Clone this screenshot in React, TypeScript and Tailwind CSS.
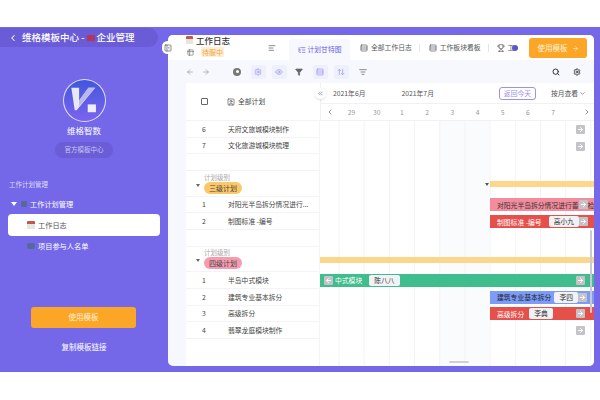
import { ArrowLeft, ArrowRight, ChevronDown, ChevronLeft, ChevronRight, ChevronsLeft, Eye, Filter, ListTree, Search, Settings, AlignLeft, Rows3, ArrowUpDown, ListFilter, Table2, SquareUser, Trophy, PanelLeftClose } from "lucide-react"

const font = "font-['Noto_Sans_CJK_SC','Noto_Sans',sans-serif]"

function GoArrow({ back }: { back?: boolean }) {
  return (
    <span className="flex h-[9px] w-[9px] shrink-0 items-center justify-center rounded-[1px] bg-[#c4c4c8]">
      {back ? (
        <ArrowLeft size={7} strokeWidth={3} className="text-white" />
      ) : (
        <ArrowRight size={7} strokeWidth={3} className="text-white" />
      )}
    </span>
  )
}

function Tag({ children }: { children: string }) {
  return (
    <span className="rounded-[2px] bg-[#f1f2f6] px-[5px] text-[6.8px] leading-[11px] text-[#333]">{children}</span>
  )
}

function Row({ no, name, children }: { no?: string; name?: string; children?: React.ReactNode }) {
  return (
    <div className="flex h-[16.7px] shrink-0 items-stretch">
      <div className="flex w-[134px] shrink-0 items-center border-b border-r border-[#f4f4f8] bg-white text-[6.8px] text-[#444]">
        <span className="w-[24px] pl-[16px]">{no}</span>
        <span className="whitespace-nowrap pl-[18px]">{name}</span>
      </div>
      <div className="flex min-w-0 flex-1 items-center">{children}</div>
    </div>
  )
}

function GroupRow({ pill, bar }: { pill: string; bar: string }) {
  return (
    <div className="flex h-[25.5px] shrink-0 items-stretch">
      <div className="flex w-[134px] shrink-0 items-center border-b border-r border-[#f4f4f8] bg-white pl-[10px]">
        <span className="mr-[4px] mt-[4px] h-0 w-0 border-x-[2px] border-t-[3px] border-x-transparent border-t-[#666]" />
        <div className="flex flex-col items-start">
          <span className="text-[6.5px] leading-[9px] text-[#aaa]">计划级别</span>
          <span className={`rounded-full px-[5px] text-[7px] leading-[12px] text-[#444] ${pill}`}>{bar}</span>
        </div>
      </div>
      <div className="flex-1" />
    </div>
  )
}

function Bar({ color, indent, children }: { color: string; indent?: boolean; children: React.ReactNode }) {
  return (
    <div className={`flex h-[13px] flex-1 items-center overflow-hidden whitespace-nowrap text-[6.8px] ${color} ${indent ? "ml-[170px] pl-[7px]" : ""}`}>
      {children}
    </div>
  )
}

const days = ["29", "30", "1", "2", "3", "4", "5", "6", "7"]

export default function App() {
  return (
    <div className={`flex h-[400px] w-[600px] flex-col bg-white pt-[27px] ${font}`}>
      <div className="flex h-[345px] bg-[#7568e8]">
        <aside className="flex w-[168px] shrink-0 flex-col text-white">
          <div className="mt-[1px] flex h-[19px] w-[158px] items-center whitespace-nowrap rounded-r-[10px] bg-[#6a5cd6] pl-[8px] text-[9.5px] font-medium">
            <ChevronLeft size={10} strokeWidth={2.5} className="mr-[4px]" />
            维格模板中心 -
            <span className="mx-[2px] h-[6px] w-[8px] bg-[#b0365f]" />
            企业管理
          </div>

          <div className="mt-[32px] flex flex-col items-center">
            <div className="h-[43px] w-[43px] rounded-full border border-white/80 bg-gradient-to-b from-[#3f57dc] to-[#7b63ee]">
              <svg viewBox="0 0 42 42" className="h-full w-full">
                <path d="M7.5 8H15.5V21L25 8H32L13 31H11Z" fill="#e8e7f8" />
                <path d="M15.5 21L25 8H32L15.5 27Z" fill="#b9b6f0" />
                <rect x="24.3" y="25" width="8.4" height="8" fill="#eeeefb" />
              </svg>
            </div>
            <span className="mt-[2px] text-[8.5px] leading-[13px]">维格智数</span>
            <span className="mt-[5px] flex h-[16px] w-[58px] items-center justify-center rounded-full bg-[#6a5dd6] text-[6.5px] text-[#c9c5f5]">
              官方模板中心
            </span>
          </div>

          <div className="mt-[21px] pl-[9px] text-[6.5px] leading-[10px] text-[#dedbfa]">工作计划管理</div>
          <div className="mt-[8px] flex h-[14px] items-center pl-[11px] text-[7.2px]">
            <span className="mr-[4px] h-0 w-0 border-x-[3px] border-t-[4px] border-x-transparent border-t-white" />
            <span className="mr-[3px] h-[6px] w-[6px] rounded-[1px] bg-[#55699a]" />
            工作计划管理
          </div>
          <div className="ml-[8px] mt-[3px] flex h-[22px] w-[152px] items-center rounded-[4px] bg-white pl-[19px] text-[7.2px] text-[#555]">
            <span className="mr-[3px] h-[8px] w-[8px] rounded-[1px] border-t-[3px] border-[#c4574c] bg-[#e8e4e0]" />
            工作日志
          </div>
          <div className="mt-[3px] flex h-[14px] items-center pl-[27px] text-[7.2px]">
            <span className="mr-[3px] h-[6px] w-[8px] rounded-[2px] bg-[#55699a]" />
            项目参与人名单
          </div>

          <button className="ml-[31px] mt-[53.5px] flex h-[21px] w-[105px] items-center justify-center rounded-[3px] bg-[#fca627] text-[7.5px] text-[#fff3dc]">
            使用模板
          </button>
          <span className="mt-[13px] text-center text-[7.5px] leading-[11px]">复制模板链接</span>
        </aside>

        <main className="relative mt-[8px] flex h-[331px] w-[426px] flex-col overflow-hidden rounded-[5px] bg-[#f7f8fd]">
          <header className="flex h-[25px] shrink-0 items-center whitespace-nowrap bg-white pl-[18px]">
            <div className="-mt-[1px] w-[82px] self-start">
              <div className="flex items-center gap-[3px] text-[8.5px] font-medium leading-[12px] text-[#333]">
                <span className="h-[8px] w-[7px] rounded-[1px] border-t-[3px] border-[#c4574c] bg-[#e8e4e0]" />
                工作日志
              </div>
              <div className="mt-[1px] flex items-center">
                <Table2 size={7} className="ml-[1px] mr-[7px] text-[#666]" />
                <span className="rounded-[1px] bg-[#fdeed5] px-[1px] text-[7px] leading-[10px] text-[#f3a93c]">待服中</span>
              </div>
            </div>
            <AlignLeft size={8} className="text-[#555]" />
            <div className="ml-[13px] flex h-[21px] w-[61px] items-center justify-center gap-[2px] self-end rounded-t-[3px] bg-[#f7f8fd] text-[6.8px] text-[#6a5de0]">
              <ListTree size={8} />
              计划甘特图
            </div>
            <div className="ml-[10px] flex items-center gap-[3px] text-[6.8px] text-[#555]">
              <Rows3 size={8} />
              全部工作日志
            </div>
            <span className="ml-[7px] h-[8px] w-px bg-[#e5e5ea]" />
            <div className="ml-[9px] flex items-center gap-[3px] text-[6.8px] text-[#555]">
              <Rows3 size={8} />
              工作板块看板
            </div>
            <span className="ml-[7px] h-[8px] w-px bg-[#e5e5ea]" />
            <div className="ml-[8px] flex items-center text-[6.8px] text-[#555]">
              <Trophy size={8} className="mr-[3px]" />工
              <span className="-ml-[2px] h-[6px] w-[6px] rounded-full bg-[#5b55c8]" />
            </div>
            <button className="ml-auto mr-[7px] mt-[3px] flex h-[20px] w-[58px] items-center justify-center gap-[4px] self-start rounded-[3px] bg-[#fca627] text-[7.5px] text-[#fff3dc]">
              使用模板
              <ArrowRight size={7} />
            </button>
          </header>

          <div className="flex h-[23px] shrink-0 items-center pl-[18px] text-[#999]">
            <ArrowLeft size={8} />
            <ArrowRight size={8} className="ml-[8px]" />
            <span className="ml-[23px] flex h-[8px] w-[8px] items-center justify-center rounded-full bg-[#777]">
              <span className="h-[3px] w-[3px] rounded-full bg-white" />
            </span>
            <span className="ml-[9.5px] flex h-[14px] w-[15px] items-center justify-center rounded-[2px] bg-[#eef0fb] text-[#9a90ee]"><Settings size={8} /></span>
            <span className="ml-[6px] flex h-[14px] w-[15px] items-center justify-center rounded-[2px] bg-[#eef0fb] text-[#9a90ee]"><Eye size={8} /></span>
            <Filter size={8} fill="currentColor" className="ml-[8.5px] text-[#666]" />
            <span className="ml-[9.5px] flex h-[14px] w-[15px] items-center justify-center rounded-[2px] bg-[#eef0fb] text-[#9a90ee]"><Rows3 size={8} /></span>
            <span className="ml-[6px] flex h-[14px] w-[15px] items-center justify-center rounded-[2px] bg-[#eef0fb] text-[#9a90ee]"><ArrowUpDown size={8} /></span>
            <ListFilter size={8} className="ml-[10.5px] text-[#555]" />
            <Search size={8} strokeWidth={3} className="ml-auto text-[#333]" />
            <Settings size={8} strokeWidth={2.5} className="ml-[13px] mr-[13px] text-[#333]" />
          </div>

          <div className="ml-[18px] flex h-[38px] shrink-0 bg-white">
            <div className="flex w-[134px] shrink-0 items-center border-b border-[#f4f4f8] pl-[15px] text-[6.8px] text-[#444]">
              <span className="h-[7px] w-[7px] rounded-[1px] border border-[#666]" />
              <SquareUser size={8} className="ml-[19px] mr-[3px] text-[#555]" />
              全部计划
            </div>
            <div className="flex-1 border-b border-l border-[#f1f1f5]">
              <div className="flex h-[21px] items-center whitespace-nowrap border-b border-[#f1f1f5] text-[6.8px] text-[#555]">
                <span className="ml-[12px]">2021年6月</span>
                <span className="ml-[36px]">2021年7月</span>
                <span className="ml-[65px] flex h-[13px] w-[37px] items-center justify-center rounded-[3px] border border-[#9c92ea] text-[#9c92ea]">返回今天</span>
                <span className="ml-[15px] flex items-center gap-[1px]">按月查看<ChevronDown size={7} /></span>
              </div>
              <div className="flex h-[16px] items-center pl-[5px] pr-[3px] text-[6.8px] text-[#999]">
                <ChevronLeft size={8} className="text-[#555]" />
                <span className="ml-[5px] flex">
                  {days.map((d) => (
                    <span key={d} className="w-[25.2px] text-center">{d}</span>
                  ))}
                </span>
                <ChevronRight size={8} className="ml-auto text-[#555]" />
              </div>
            </div>
          </div>

          <div className="ml-[18px] flex flex-1 flex-col bg-white bg-[linear-gradient(90deg,#f3f3f7_1px,transparent_1px),linear-gradient(90deg,transparent_253px,#fafbfd_253px,#fafbfd_304px,transparent_304px)] bg-[length:25.2px_100%,100%_100%] bg-[position:152.5px_0,0_0]">
            <Row no="6" name="天府文旅城模块制作">
              <span className="ml-auto mr-[9px]"><GoArrow /></span>
            </Row>
            <Row no="7" name="文化旅游城模块梳理">
              <span className="ml-auto mr-[9px]"><GoArrow /></span>
            </Row>
            <Row />
            <GroupRow pill="bg-[#fcc766]" bar="三级计划" />
            <Row no="1" name="对阳光半岛拆分情况进行...">
              <Bar color="bg-[#f58c9e] text-[#333]" indent>
                对阳光半岛拆分情况进行善
                <GoArrow />
                检
              </Bar>
            </Row>
            <Row no="2" name="制图标准 -编号">
              <Bar color="bg-[#e5504b] text-white" indent>
                <span className="mr-[7px]">制图标准 -编号</span>
                <Tag>高小九</Tag>
                <GoArrow />
              </Bar>
            </Row>
            <Row />
            <GroupRow pill="bg-[#f59cb0]" bar="四级计划" />
            <Row no="1" name="半岛中式模块">
              <Bar color="bg-[#3fbd8c] text-white">
                <span className="ml-[4px] mr-[2px]"><GoArrow back /></span>
                <span className="mr-[7px]">中式模块</span>
                <Tag>陈八八</Tag>
                <span className="ml-auto mr-[9px]"><GoArrow /></span>
              </Bar>
            </Row>
            <Row no="2" name="建筑专业基本拆分">
              <Bar color="bg-[#7c9cf5] text-[#223]" indent>
                <span className="mr-[3px]">建筑专业基本拆分</span>
                <Tag>李四</Tag>
                <GoArrow />
              </Bar>
            </Row>
            <Row no="3" name="高级拆分">
              <Bar color="bg-[#e5504b] text-white" indent>
                <span className="mr-[5px]">高级拆分</span>
                <Tag>李典</Tag>
                <span className="ml-auto mr-[9px]"><GoArrow /></span>
              </Bar>
            </Row>
            <Row no="4" name="翡翠龙庭模块制作">
              <span className="ml-auto mr-[9px]"><GoArrow /></span>
            </Row>
            <div className="flex flex-1">
              <div className="w-[134px] border-r border-[#f4f4f8] bg-white" />
            </div>
          </div>

          {/* summary bars of the two groups sit over the grid */}
          <div className="absolute left-[322px] right-0 top-[146px] h-[6px] bg-[#fcd68a]" />
          <div className="absolute left-[152px] right-0 top-[222px] h-[6px] bg-[#fcd68a]" />
          <div className="absolute left-[317px] top-[148px] h-0 w-0 border-x-[2px] border-t-[3px] border-x-transparent border-t-[#555]" />
          <div className="absolute right-[2px] top-[195px] h-[83px] w-[2px] rounded-full bg-[#c9c9d2]" />
          <div className="absolute left-[281px] top-[326px] h-[2px] w-[20px] rounded-full bg-[#cfcfd6]" />
          <div className="absolute left-[147px] top-[53px] flex h-[11px] w-[11px] items-center justify-center rounded-full bg-white shadow-sm">
            <ChevronsLeft size={7} className="text-[#666]" />
          </div>
        </main>

        <div className="absolute left-[162px] top-[41px] flex h-[13px] w-[11px] items-center justify-center rounded-full bg-white">
          <PanelLeftClose size={8} className="text-[#555]" />
        </div>
      </div>
    </div>
  )
}
